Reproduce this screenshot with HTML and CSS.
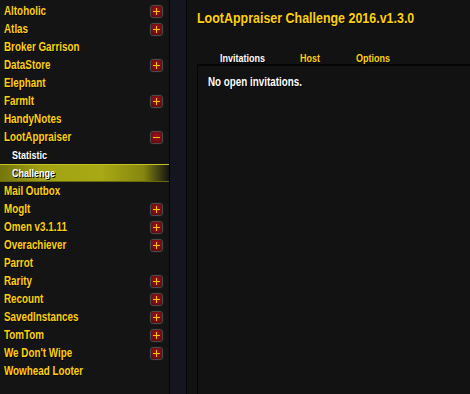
FILE: index.html
```html
<!DOCTYPE html>
<html>

<head>
    <meta content="text/html; charset=utf-8" http-equiv="Content-Type">
    <title>Interface Options - Addons</title>
    <link rel="stylesheet" href="styles.css">
</head>

<body>
    <div class="frame">
        <div class="addonList">
            <div class="row"><span class="label">Altoholic</span><span class="toggle plus"></span></div>
            <div class="row"><span class="label">Atlas</span><span class="toggle plus"></span></div>
            <div class="row"><span class="label">Broker Garrison</span></div>
            <div class="row"><span class="label">DataStore</span><span class="toggle plus"></span></div>
            <div class="row"><span class="label">Elephant</span></div>
            <div class="row"><span class="label">FarmIt</span><span class="toggle plus"></span></div>
            <div class="row"><span class="label">HandyNotes</span></div>
            <div class="row"><span class="label">LootAppraiser</span><span class="toggle minus"></span></div>
            <div class="row sub"><span class="label">Statistic</span></div>
            <div class="row sub selected"><span class="label">Challenge</span></div>
            <div class="row"><span class="label">Mail Outbox</span></div>
            <div class="row"><span class="label">MogIt</span><span class="toggle plus"></span></div>
            <div class="row"><span class="label">Omen v3.1.11</span><span class="toggle plus"></span></div>
            <div class="row"><span class="label">Overachiever</span><span class="toggle plus"></span></div>
            <div class="row"><span class="label">Parrot</span></div>
            <div class="row"><span class="label">Rarity</span><span class="toggle plus"></span></div>
            <div class="row"><span class="label">Recount</span><span class="toggle plus"></span></div>
            <div class="row"><span class="label">SavedInstances</span><span class="toggle plus"></span></div>
            <div class="row"><span class="label">TomTom</span><span class="toggle plus"></span></div>
            <div class="row"><span class="label">We Don't Wipe</span><span class="toggle plus"></span></div>
            <div class="row"><span class="label">Wowhead Looter</span></div>
        </div>
        <div class="divider"></div>
        <div class="panel">
            <div class="panelTitle"><span class="titleText">LootAppraiser Challenge 2016.v1.3.0</span></div>
            <div class="tabs">
                <span class="tab active"><span class="tabText">Invitations</span></span>
                <span class="tab"><span class="tabText">Host</span></span>
                <span class="tab"><span class="tabText">Options</span></span>
            </div>
            <div class="tabBody">
                <span class="message">No open invitations.</span>
            </div>
        </div>
    </div>
</body>

</html>
```

FILE: styles.css
```css
html, body {
    margin: 0;
    padding: 0;
    background: #121212;
}

body {
    font-family: "Liberation Sans", Arial, sans-serif;
    font-weight: bold;
}

/* the game font is a narrow bold face; squeeze Arial-metrics text to match */
.label,
.titleText,
.tabText,
.message {
    display: inline-block;
    white-space: nowrap;
    transform-origin: left center;
    transform: scaleX(0.82);
    text-shadow: 1px 1px 0 #000;
}

.frame {
    display: flex;
    width: 470px;
    height: 394px;
    overflow: hidden;
}

.addonList {
    width: 169px;
    padding-top: 2px;
    background: #141414;
    border-right: 1px solid #050505;
}

.row {
    display: flex;
    align-items: center;
    justify-content: space-between;
    height: 18px;
    padding-left: 4px;
    padding-right: 6px;
}

.label {
    color: #ffd100;
    font-size: 12px;
}

.sub .label {
    color: #ffffff;
    font-size: 11px;
    margin-left: 8px;
}

.selected {
    background: linear-gradient(to right, #74750c 0%, #a2a312 25%, #a8a914 60%, #85860f 85%, rgba(20, 20, 20, 0) 100%);
    box-shadow: inset 0 1px 0 #c2c220, inset 0 -1px 0 #6a6a0a;
}

.toggle {
    width: 11px;
    height: 11px;
    border: 1px solid #4a4a4a;
    border-radius: 3px;
    background: radial-gradient(circle at 50% 40%, #a0141a, #5a0508);
    position: relative;
    box-shadow: 0 0 0 1px #1a1a1a;
}

.toggle::before,
.toggle::after {
    content: "";
    position: absolute;
    background: #f5c400;
}

.plus::before,
.minus::before {
    left: 2px;
    top: 5px;
    width: 7px;
    height: 1px;
}

.plus::after {
    left: 5px;
    top: 2px;
    width: 1px;
    height: 7px;
}

.minus::after {
    display: none;
}

.divider {
    width: 16px;
    background: #15151f;
    border-right: 1px solid #050505;
}

.panel {
    flex: 1;
    padding-left: 10px;
    background: #121212;
    display: flex;
    flex-direction: column;
}

.panelTitle {
    margin-top: 9px;
    height: 18px;
}

.titleText {
    color: #ffd100;
    font-size: 15px;
    transform: scaleX(0.83);
}

.tabs {
    display: flex;
    margin-top: 21px;
    height: 16px;
    padding-left: 23px;
}

.tab {
    width: 80px;
}

.tab + .tab {
    width: 56px;
}

.tabText {
    color: #ffd100;
    font-size: 11px;
}

.active .tabText {
    color: #ffffff;
}

.tabBody {
    flex: 1;
    border-top: 2px solid #050505;
    border-left: 1px solid #050505;
    padding: 6px 10px;
}

.message {
    color: #ffffff;
    font-size: 12px;
}
```
